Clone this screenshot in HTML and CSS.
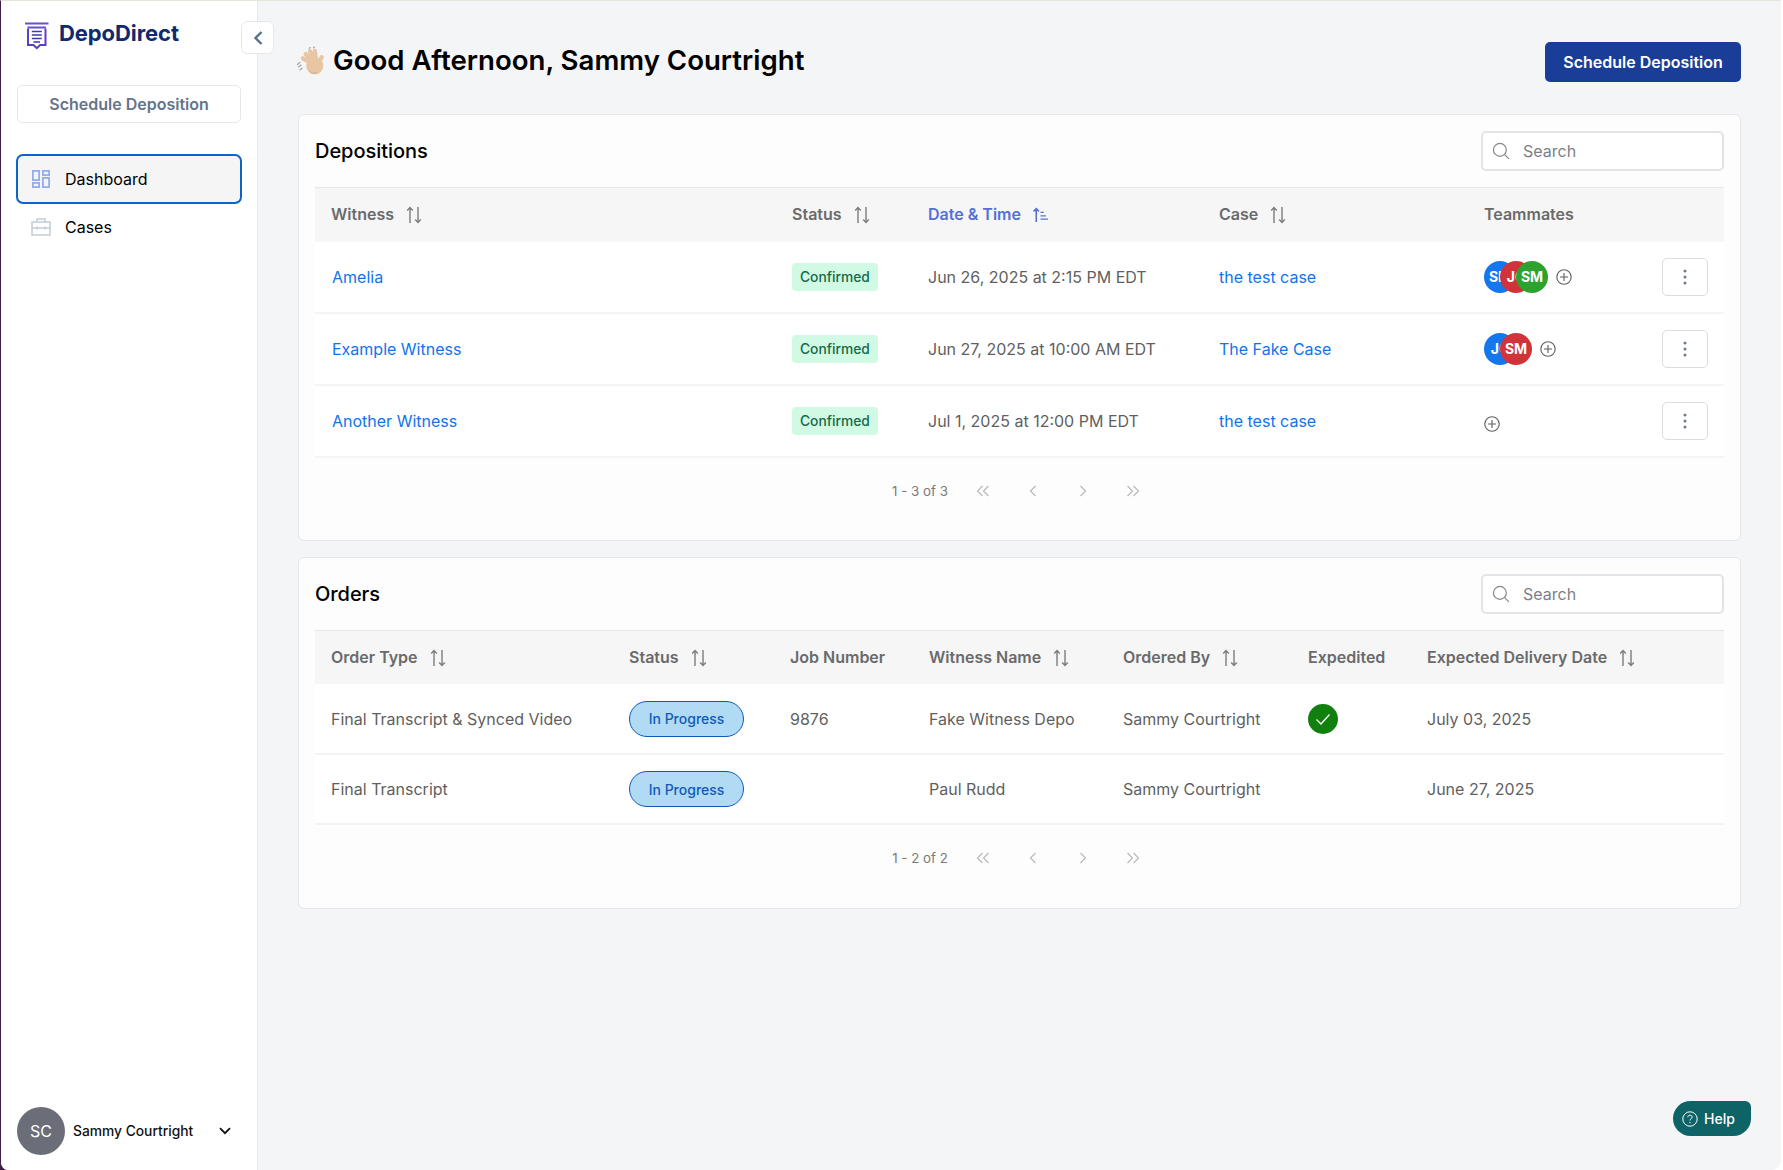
FILE: index.html
```html
<!DOCTYPE html>
<html lang="en">
<head>
<meta charset="utf-8">
<title>DepoDirect</title>
<link rel="stylesheet" href="styles.css">
</head>
<body>
<svg class="defs" width="0" height="0" aria-hidden="true">
  <defs>
    <symbol id="sort" viewBox="0 0 18 18"><path d="M5 17V1.500M2.200 4.500 5 1.500l2.800 3M13 1v15.500M10.200 13.500l2.800 3 2.800-3" fill="none" stroke="currentColor" stroke-width="1.400"/></symbol>
    <symbol id="plus" viewBox="0 0 16 16"><circle cx="8" cy="8" r="7.200" fill="none" stroke="currentColor" stroke-width="1.100"/><path d="M8 4v8M4 8h8" stroke="currentColor" stroke-width="1.100"/></symbol>
    <symbol id="dots" viewBox="0 0 4 16"><circle cx="2" cy="2" r="1.500" fill="currentColor"/><circle cx="2" cy="8" r="1.500" fill="currentColor"/><circle cx="2" cy="14" r="1.500" fill="currentColor"/></symbol>
    <symbol id="search" viewBox="0 0 16 16"><circle cx="7" cy="7" r="5.700" fill="none" stroke="currentColor" stroke-width="1.100"/><path d="m11.200 11.200 3.800 3.800" stroke="currentColor" stroke-width="1.100"/></symbol>
    <symbol id="first" viewBox="0 0 14 12"><path d="M6.500 1 1.500 6l5 5M12.500 1l-5 5 5 5" fill="none" stroke="currentColor" stroke-width="1.200"/></symbol>
    <symbol id="prev" viewBox="0 0 14 12"><path d="M9.500 1 4.500 6l5 5" fill="none" stroke="currentColor" stroke-width="1.200"/></symbol>
    <symbol id="next" viewBox="0 0 14 12"><path d="m4.500 1 5 5-5 5" fill="none" stroke="currentColor" stroke-width="1.200"/></symbol>
    <symbol id="last" viewBox="0 0 14 12"><path d="m1.500 1 5 5-5 5M7.500 1l5 5-5 5" fill="none" stroke="currentColor" stroke-width="1.200"/></symbol>
  </defs>
</svg>
<div class="app">
  <aside class="sidebar">
    <div class="brand">
      <svg class="brand-icon" viewBox="0 0 24 28"><path d="M0 .5h23.500v2H0z" fill="#6a4fd0"/><path d="M2.500 4.500h18.500v2H2.500z" fill="#6a4fd0"/><path d="M3 6.500v16.500h5.500l3.300 3.200 3.300-3.200H20.500V6.500" fill="none" stroke="#5a3fc4" stroke-width="2"/><path d="M6.800 9.500h10M6.800 13h10M6.800 16.500h10M8.500 20h6.500" stroke="#3b3aa8" stroke-width="1.500"/></svg>
      <span class="brand-name">DepoDirect</span>
      <button class="collapse" aria-label="Collapse"><svg viewBox="0 0 10 16" width="10" height="16"><path d="M8.500 2 2.500 8l6 6" fill="none" stroke="#56708f" stroke-width="2.400"/></svg></button>
    </div>
    <button class="side-cta">Schedule Deposition</button>
    <nav class="nav">
      <a class="nav-item active">
        <svg class="nav-icon" viewBox="0 0 18 18"><g fill="none" stroke="#8fa8f0" stroke-width="1.700"><rect x=".9" y=".9" width="6.200" height="9.200"/><rect x="10.900" y=".9" width="6.200" height="4.200"/><rect x=".9" y="12.900" width="6.200" height="4.200"/><rect x="10.900" y="7.900" width="6.200" height="9.200"/></g></svg>
        <span>Dashboard</span>
      </a>
      <a class="nav-item">
        <svg class="nav-icon case-icon" viewBox="0 0 20 18"><g fill="none" stroke="#c3ccd6" stroke-width="1.500"><rect x="1" y="4" width="18" height="13"/><path d="M6 4V1h8v3M1 10h18"/><path d="M6 8.500v3M14 8.500v3"/></g></svg>
        <span>Cases</span>
      </a>
    </nav>
    <div class="user">
      <span class="user-avatar">SC</span>
      <span class="user-name">Sammy Courtright</span>
      <svg class="user-caret" viewBox="0 0 12 8"><path d="m1 1.200 5 5 5-5" fill="none" stroke="#111" stroke-width="1.800"/></svg>
    </div>
  </aside>

  <main class="main">
    <header class="top">
      <h1 class="greeting">
        <svg class="wave" viewBox="0 0 28 28"><g fill="none" stroke="#9a9a9a" stroke-width="1"><path d="M1 17.500 4 15M2 20l3-2.500M3.500 22.500 6 20.500"/><path d="M12 2.500l1.500-1.500M16 2l1.500-1.500"/></g><g fill="none" stroke="#e9c6a3" stroke-linecap="round" stroke-width="4"><path d="M16 17 6.500 11.500M16 15 9 7.500M17 14 13 4.800M19 14 17.500 4.500M21 16l3-5.500"/></g><circle cx="17.500" cy="18.500" r="8" fill="#e9c6a3"/><path d="M12 23c2 2 5 3 8 1.500" fill="none" stroke="#d4a883" stroke-width=".8"/></svg>
        Good Afternoon, Sammy Courtright
      </h1>
      <button class="primary">Schedule Deposition</button>
    </header>

    <section class="card">
      <div class="card-head">
        <h2>Depositions</h2>
        <label class="search"><svg class="search-icon"><use href="#search"/></svg><span>Search</span></label>
      </div>
      <table class="grid depo">
        <thead>
          <tr>
            <th>Witness<svg class="sort"><use href="#sort"/></svg></th>
            <th>Status<svg class="sort"><use href="#sort"/></svg></th>
            <th class="sorted">Date &amp; Time<svg class="sort-asc" viewBox="0 0 16 14"><path d="M4 14V1.500M1.500 4 4 1.500 6.500 4" fill="none" stroke="currentColor" stroke-width="1.500"/><path d="M8 5h3M8 8.200h5M8 11.400h7" stroke="currentColor" stroke-width="1.200"/></svg></th>
            <th>Case<svg class="sort"><use href="#sort"/></svg></th>
            <th>Teammates</th>
            <th></th>
          </tr>
        </thead>
        <tbody>
          <tr>
            <td><a class="link">Amelia</a></td>
            <td><span class="chip">Confirmed</span></td>
            <td>Jun 26, 2025 at 2:15 PM EDT</td>
            <td><a class="link">the test case</a></td>
            <td><div class="team"><span class="av blue">SM</span><span class="av red">JC</span><span class="av green">SM</span><svg class="plus"><use href="#plus"/></svg></div></td>
            <td><button class="kebab" aria-label="More"><svg class="dots"><use href="#dots"/></svg></button></td>
          </tr>
          <tr>
            <td><a class="link">Example Witness</a></td>
            <td><span class="chip">Confirmed</span></td>
            <td>Jun 27, 2025 at 10:00 AM EDT</td>
            <td><a class="link">The Fake Case</a></td>
            <td><div class="team"><span class="av blue">JC</span><span class="av red">SM</span><svg class="plus"><use href="#plus"/></svg></div></td>
            <td><button class="kebab" aria-label="More"><svg class="dots"><use href="#dots"/></svg></button></td>
          </tr>
          <tr>
            <td><a class="link">Another Witness</a></td>
            <td><span class="chip">Confirmed</span></td>
            <td>Jul 1, 2025 at 12:00 PM EDT</td>
            <td><a class="link">the test case</a></td>
            <td><div class="team team-empty"><svg class="plus"><use href="#plus"/></svg></div></td>
            <td><button class="kebab" aria-label="More"><svg class="dots"><use href="#dots"/></svg></button></td>
          </tr>
        </tbody>
      </table>
      <div class="pager">
        <span class="count">1 - 3 of 3</span>
        <svg class="pg"><use href="#first"/></svg><svg class="pg"><use href="#prev"/></svg><svg class="pg"><use href="#next"/></svg><svg class="pg"><use href="#last"/></svg>
      </div>
    </section>

    <section class="card">
      <div class="card-head">
        <h2>Orders</h2>
        <label class="search"><svg class="search-icon"><use href="#search"/></svg><span>Search</span></label>
      </div>
      <table class="grid orders">
        <thead>
          <tr>
            <th>Order Type<svg class="sort"><use href="#sort"/></svg></th>
            <th>Status<svg class="sort"><use href="#sort"/></svg></th>
            <th>Job Number</th>
            <th>Witness Name<svg class="sort"><use href="#sort"/></svg></th>
            <th>Ordered By<svg class="sort"><use href="#sort"/></svg></th>
            <th>Expedited</th>
            <th>Expected Delivery Date<svg class="sort"><use href="#sort"/></svg></th>
          </tr>
        </thead>
        <tbody>
          <tr>
            <td>Final Transcript &amp; Synced Video</td>
            <td><span class="pill">In Progress</span></td>
            <td>9876</td>
            <td>Fake Witness Depo</td>
            <td>Sammy Courtright</td>
            <td><svg class="check" viewBox="0 0 30 30"><circle cx="15" cy="15" r="15" fill="#12800f"/><path d="m8.500 15.500 4.500 4.500 8.500-9.500" fill="none" stroke="#fff" stroke-width="1.300"/></svg></td>
            <td>July 03, 2025</td>
          </tr>
          <tr>
            <td>Final Transcript</td>
            <td><span class="pill">In Progress</span></td>
            <td></td>
            <td>Paul Rudd</td>
            <td>Sammy Courtright</td>
            <td></td>
            <td>June 27, 2025</td>
          </tr>
        </tbody>
      </table>
      <div class="pager">
        <span class="count">1 - 2 of 2</span>
        <svg class="pg"><use href="#first"/></svg><svg class="pg"><use href="#prev"/></svg><svg class="pg"><use href="#next"/></svg><svg class="pg"><use href="#last"/></svg>
      </div>
    </section>
  </main>
</div>
<button class="help"><svg class="help-icon" viewBox="0 0 16 16"><circle cx="8" cy="8" r="7.200" fill="none" stroke="#fff" stroke-width="1"/><path d="M5.800 6.200C5.900 4.900 6.900 4.200 8 4.200c1.300 0 2.200.8 2.200 1.900 0 1.500-2.200 1.700-2.200 3.400" fill="none" stroke="#fff" stroke-width="1"/><circle cx="8" cy="11.600" r=".7" fill="#fff"/></svg>Help</button>
</body>
</html>
```
FILE: styles.css
```css
* { box-sizing: border-box; }
html, body { margin: 0; height: 100%; }
body {
  font-family: Inter, "Liberation Sans", sans-serif;
  background: linear-gradient(90deg, #3b1f45 50%, #fff 50%);
  color: #000;
  overflow: hidden;
}
.defs { position: absolute; }
button { font-family: inherit; }

.app {
  display: flex;
  height: 1170px;
  margin-right: 2px;
  overflow: hidden;
  background: #f4f5f7;
  border-top: 1px solid #e4e6da;
  border-left: 1px solid #3b1f45;
  border-radius: 0 0 10px 8px;
}

.sidebar {
  width: 257px;
  flex: none;
  display: flex;
  flex-direction: column;
  background: #fff;
  border-right: 1px solid #e5e7eb;
  padding: 0 16px;
}
.brand { position: relative; height: 84px; display: flex; align-items: flex-start; padding: 21px 0 0 8px; }
.brand-icon { width: 24px; height: 28px; flex: none; }
.brand-name { margin: -1px 0 0 10px; font-size: 22px; line-height: 24px; font-weight: 700; color: #0f2a6e; letter-spacing: -.08px; }
.collapse {
  position: absolute;
  left: 224px;
  top: 20px;
  width: 33px;
  height: 33px;
  padding: 0;
  display: flex;
  align-items: center;
  justify-content: center;
  background: #fff;
  border: 1px solid #e5e7eb;
  border-radius: 6px;
}
.side-cta {
  width: 224px;
  height: 38px;
  background: #fff;
  border: 1px solid #e5e7eb;
  border-radius: 5px;
  font-size: 16px;
  font-weight: 600;
  color: #64748b;
}
.nav { display: flex; flex-direction: column; margin-top: 31px; }
.nav-item {
  display: flex;
  align-items: center;
  width: 226px;
  height: 50px;
  margin: 0 0 -2px -1px;
  padding-left: 14px;
  font-size: 16px;
  color: #000;
  border: 2px solid transparent;
  border-radius: 7px;
}
.nav-item.active { background: #f5f5f6; border-color: #0f62c7; }
.nav-icon { width: 18px; height: 18px; flex: none; margin-right: 15px; }
.case-icon { width: 20px; margin-right: 14px; margin-left: -1px; }
.user { margin-top: auto; margin-bottom: 15px; display: flex; align-items: center; }
.user-avatar {
  width: 48px; height: 48px; flex: none; border-radius: 50%;
  background: #6b6e79; color: #fff;
  display: flex; align-items: center; justify-content: center;
  font-size: 16px;
}
.user-name { margin-left: 8px; font-size: 13.800px; font-weight: 500; color: #111; }
.user-caret { width: 12px; height: 8px; margin-left: 26px; }

.main { flex: 1; min-width: 0; padding: 0 40px; display: flex; flex-direction: column; }
.top { height: 113px; flex: none; display: flex; justify-content: space-between; align-items: flex-start; padding-top: 41px; }
.greeting { margin: -1px 0 0 -2px; display: flex; align-items: center; gap: 7px; font-size: 27.600px; line-height: 38px; font-weight: 600; }
.wave { width: 30px; height: 30px; flex: none; margin-top: 1px; }
.primary {
  width: 196px; height: 40px;
  padding: 0 0 1px;
  background: #1a3d97; color: #fff;
  border: 0; border-radius: 5px;
  font-size: 16px; font-weight: 600;
}
.card {
  background: #fdfdfd;
  border: 1px solid #e5e7eb;
  border-radius: 6px;
  padding: 0 16px;
  margin-bottom: 16px;
}
.card-head { height: 72px; display: flex; align-items: center; justify-content: space-between; }
.card-head h2 { margin: 0; font-size: 20px; font-weight: 500; letter-spacing: -.05px; }
.search {
  width: 243px; height: 40px;
  display: flex; align-items: center;
  padding-left: 9px;
  background: #fff;
  border: 2px solid #e2e4e8;
  border-radius: 5px;
  font-size: 16px;
  color: #7b7f87;
}
.search-icon { width: 18px; height: 18px; color: #85888f; margin-right: 13px; }

.grid { width: 100%; border-collapse: collapse; table-layout: fixed; background: #fff; }
.grid th {
  height: 54px;
  padding: 0 0 2px 16px;
  text-align: left;
  background: #f6f6f7;
  border-top: 1px solid #e5e7eb;
  font-size: 16px;
  font-weight: 600;
  color: #6a6a6a;
  white-space: nowrap;
}
.orders th { padding-bottom: 0; }
.grid td {
  height: 72px;
  padding: 0 0 0 16px;
  font-size: 16px;
  color: #5f5f5f;
  border-bottom: 2px solid #f4f4f5;
  white-space: nowrap;
}
.depo tbody tr:first-child td { height: 71px; }
.orders td { height: 70px; }
.sort { width: 18px; height: 18px; margin-left: 11px; vertical-align: -4px; color: #7d7d7d; }
.sorted { color: #5470d6 !important; }
.sort-asc { width: 17px; height: 15px; margin-left: 11px; vertical-align: -2px; }

.depo th:nth-child(1) { width: 461px; }
.depo th:nth-child(2) { width: 136px; }
.depo th:nth-child(3) { width: 291px; }
.depo th:nth-child(4) { width: 265px; }
.depo th:nth-child(5) { width: 178px; }
.orders th:nth-child(1) { width: 298px; }
.orders th:nth-child(2) { width: 161px; }
.orders th:nth-child(3) { width: 139px; }
.orders th:nth-child(4) { width: 194px; }
.orders th:nth-child(5) { width: 185px; }
.orders th:nth-child(6) { width: 119px; }

.link { color: #0f74ee; }
.depo td:first-child .link { margin-left: 1px; }
.chip {
  display: inline-block;
  padding: 0 8px;
  height: 28px;
  line-height: 28px;
  background: #d1fae5;
  color: #166a45;
  border-radius: 4px;
  font-size: 13.800px;
  font-weight: 500;
}
.pill {
  display: inline-flex;
  align-items: center;
  justify-content: center;
  width: 115px;
  height: 36px;
  background: #b1dbf5;
  color: #0f5ab8;
  border: 1px solid #0f5ab8;
  border-radius: 18px;
  font-size: 14px;
  font-weight: 500;
}
.check { display: block; width: 30px; height: 30px; }
.team { display: flex; align-items: center; }
.av {
  width: 32px; height: 32px;
  border-radius: 50%;
  margin-right: -16px;
  overflow: hidden;
  display: flex; align-items: center; justify-content: center;
  font-size: 14px; font-weight: 700; color: #fff;
  white-space: nowrap;
  position: relative;
}
.blue { background: #1477ee; }
.red { background: #d0333a; }
.green { background: #2da22f; }
.plus { width: 16px; height: 16px; color: #5e5e5e; margin-left: 24px; flex: none; }
.team-empty .plus { margin-left: 0; margin-top: 7px; }
.kebab {
  width: 46px; height: 38px;
  padding: 0;
  display: flex; align-items: center; justify-content: center;
  background: #fff;
  border: 1px solid #d9dde2;
  border-radius: 5px;
}
.dots { width: 4px; height: 16px; color: #6b7a90; }
.pager { height: 65px; margin-bottom: 17px; padding: 1px 7px 0 0; display: flex; align-items: center; justify-content: center; gap: 36px; }
.orders + .pager { height: 66px; padding-top: 0; }
.count { font-size: 13.300px; color: #7a7a7a; margin-right: -8px; }
.pg { width: 14px; height: 12px; color: #b9b9b9; }

.help {
  position: fixed;
  right: 32px;
  bottom: 34px;
  height: 35px;
  width: 78px;
  padding: 0 0 0 9px;
  display: flex; align-items: center; gap: 6px;
  background: #0e6367;
  color: #fff;
  border: 0;
  border-radius: 18px 6px 18px 18px;
  font-size: 14px;
  font-weight: 500;
}
.help-icon { width: 16px; height: 16px; }
```
